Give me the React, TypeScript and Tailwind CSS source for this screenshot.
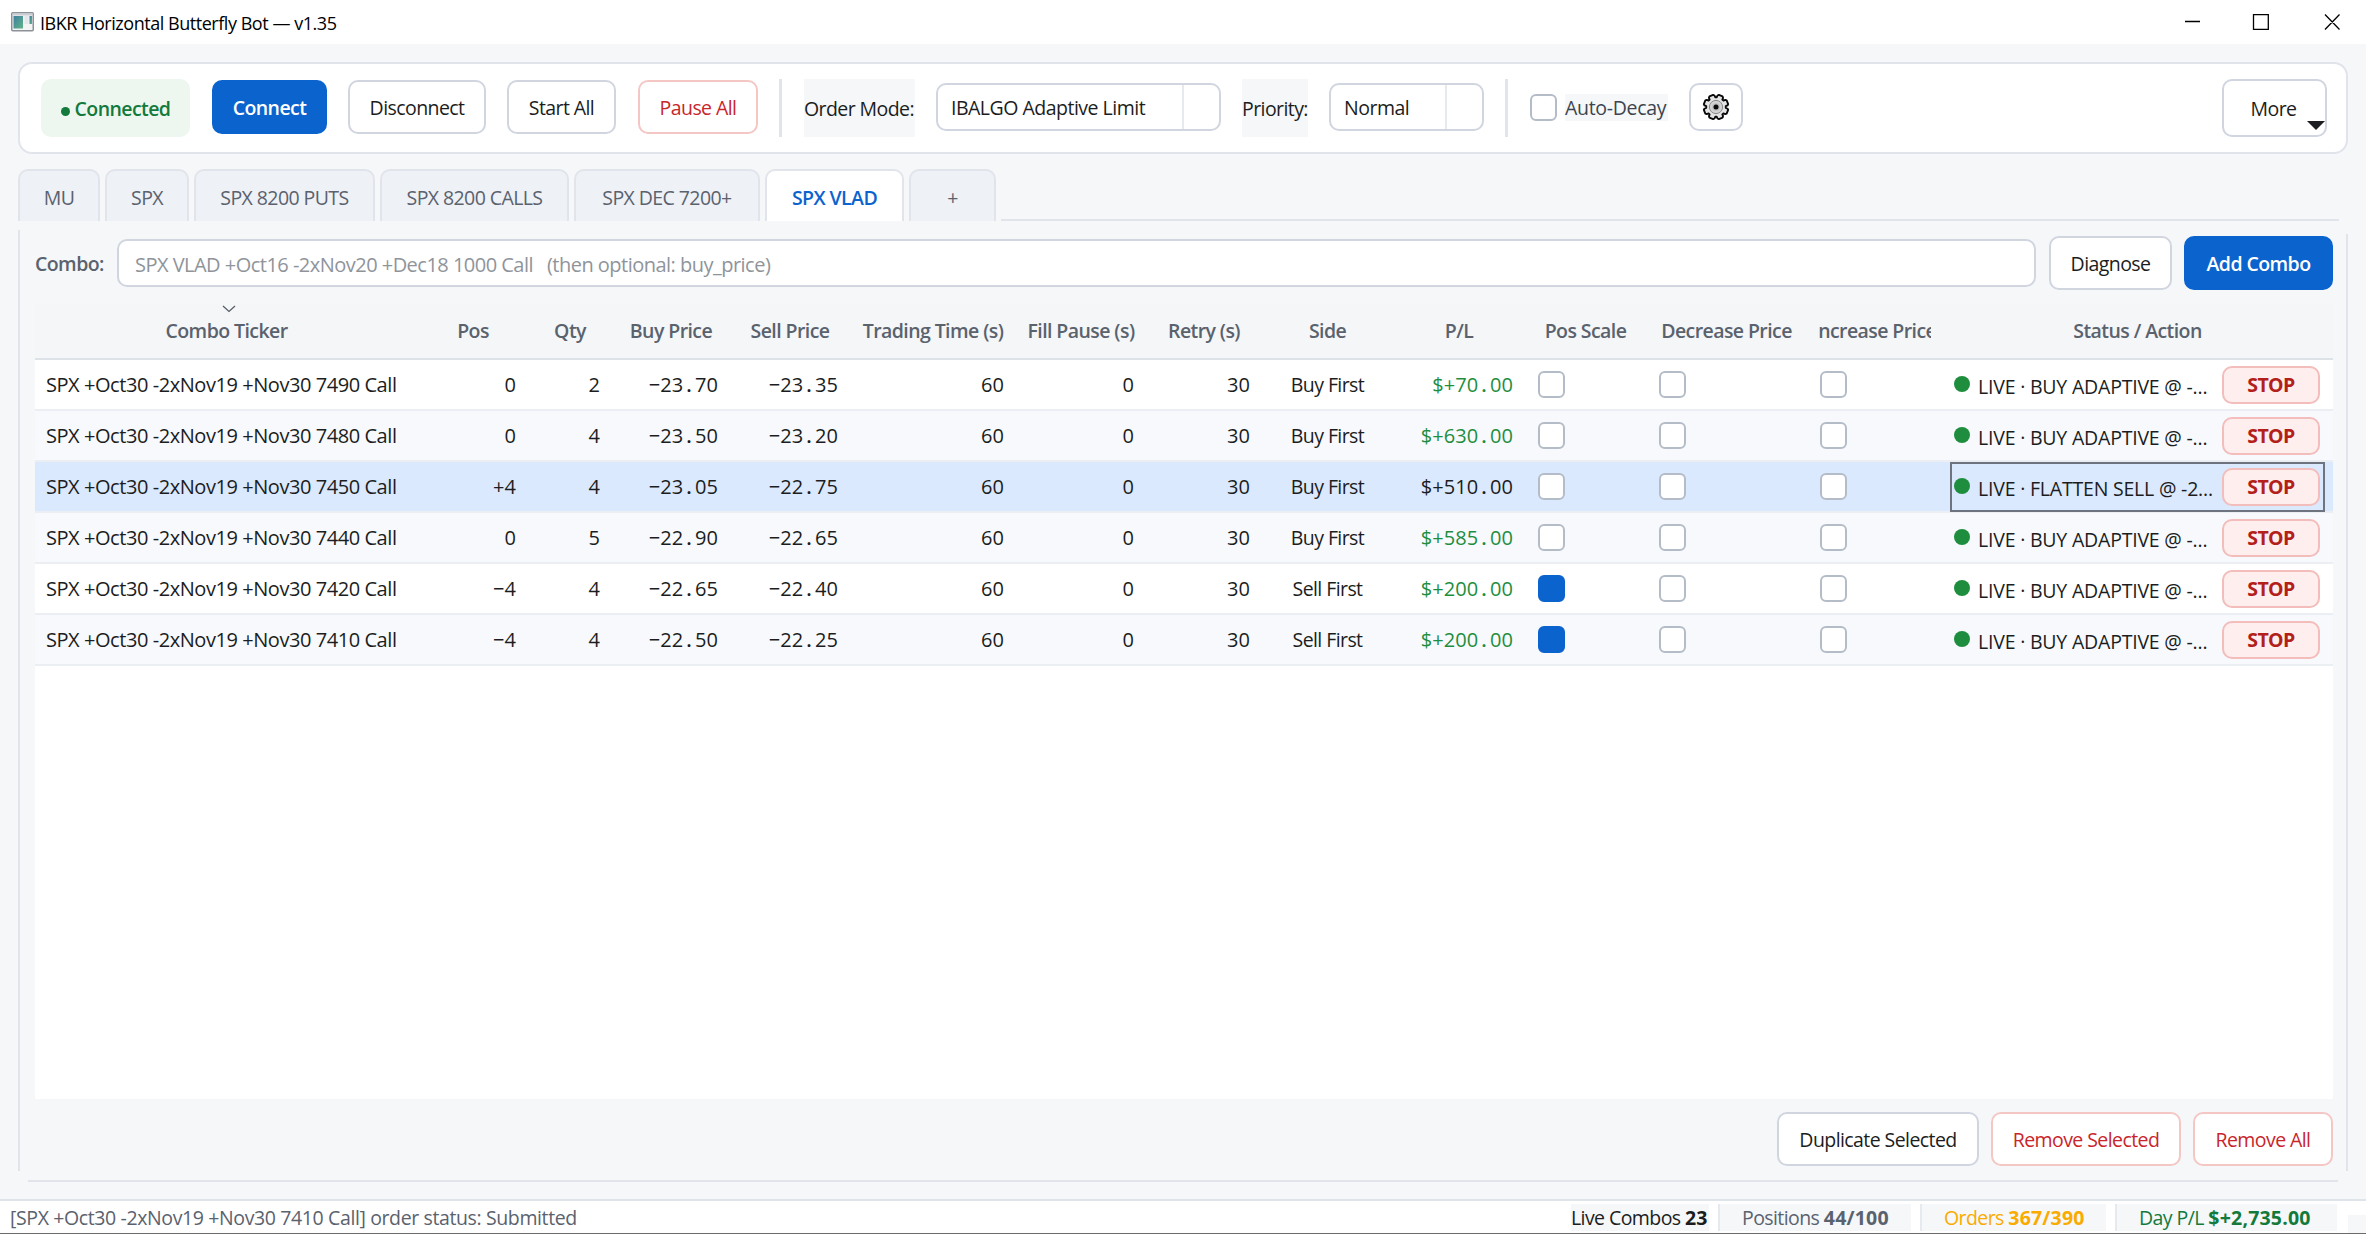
import clsx from "clsx";
import type { ReactNode } from "react";

type Combo = {
    ticker: string;
    pos: string;
    qty: string;
    buy: string;
    sell: string;
    side: string;
    pl: string;
    scale?: boolean;
    status: string;
    selected?: boolean;
};

const combos: Combo[] = [
    { ticker: "SPX +Oct30 -2xNov19 +Nov30 7490 Call", pos: "0", qty: "2", buy: "−23.70", sell: "−23.35", side: "Buy First", pl: "$+70.00", status: "LIVE · BUY ADAPTIVE @ -..." },
    { ticker: "SPX +Oct30 -2xNov19 +Nov30 7480 Call", pos: "0", qty: "4", buy: "−23.50", sell: "−23.20", side: "Buy First", pl: "$+630.00", status: "LIVE · BUY ADAPTIVE @ -..." },
    { ticker: "SPX +Oct30 -2xNov19 +Nov30 7450 Call", pos: "+4", qty: "4", buy: "−23.05", sell: "−22.75", side: "Buy First", pl: "$+510.00", status: "LIVE · FLATTEN SELL @ -2...", selected: true },
    { ticker: "SPX +Oct30 -2xNov19 +Nov30 7440 Call", pos: "0", qty: "5", buy: "−22.90", sell: "−22.65", side: "Buy First", pl: "$+585.00", status: "LIVE · BUY ADAPTIVE @ -..." },
    { ticker: "SPX +Oct30 -2xNov19 +Nov30 7420 Call", pos: "−4", qty: "4", buy: "−22.65", sell: "−22.40", side: "Sell First", pl: "$+200.00", scale: true, status: "LIVE · BUY ADAPTIVE @ -..." },
    { ticker: "SPX +Oct30 -2xNov19 +Nov30 7410 Call", pos: "−4", qty: "4", buy: "−22.50", sell: "−22.25", side: "Sell First", pl: "$+200.00", scale: true, status: "LIVE · BUY ADAPTIVE @ -..." },
];

const headers = [
    "Combo Ticker", "Pos", "Qty", "Buy Price", "Sell Price", "Trading Time (s)", "Fill Pause (s)",
    "Retry (s)", "Side", "P/L", "Pos Scale", "Decrease Price", "Increase Price", "Status / Action",
];

const tabs = [
    { label: "MU", width: "w-[82px]" },
    { label: "SPX", width: "w-[84px]" },
    { label: "SPX 8200 PUTS", width: "w-[181px]" },
    { label: "SPX 8200 CALLS", width: "w-[189px]" },
    { label: "SPX DEC 7200+", width: "w-[186px]" },
    { label: "SPX VLAD", width: "w-[139px]", active: true },
    { label: "+", width: "w-[87px]" },
];

const gridCols =
    "grid grid-cols-[383px_110px_84px_118px_120px_166px_130px_116px_131px_132px_121px_161px_135px_391px]";

const variants = {
    plain: "border-[#d0d5e0] bg-white text-[#1b1d21]",
    primary: "border-[#0b63ce] bg-[#0b63ce] font-semibold text-white",
    danger: "border-[#f4c7c5] bg-white text-[#c9252b]",
};

function Button({ variant = "plain", className, children }: { variant?: keyof typeof variants; className?: string; children: ReactNode }) {
    return (
        <button
            className={clsx(
                "flex h-[54px] shrink-0 items-center justify-center whitespace-nowrap rounded-[10px] border-2 pt-px",
                variants[variant],
                className,
            )}
        >
            {children}
        </button>
    );
}

function Select({ value, className }: { value: string; className: string }) {
    return (
        <div className={clsx("flex h-12 shrink-0 rounded-[10px] border-2 border-[#d0d5e0] bg-white", className)}>
            <span className="flex flex-1 items-center whitespace-nowrap pl-[13px] pt-px tracking-[-0.5px]">{value}</span>
            <span className="w-[37px] border-l-2 border-[#e6e9ee]" />
        </div>
    );
}

function Checkbox({ checked }: { checked?: boolean }) {
    return (
        <span
            className={clsx(
                "block size-[27px] shrink-0 rounded-md border-2",
                checked ? "border-[#0b63ce] bg-[#0b63ce]" : "border-[#b4bcc8] bg-white",
            )}
        />
    );
}

function CheckCell({ checked }: { checked?: boolean }) {
    return (
        <div className="flex items-center pb-px pl-[13px]">
            <Checkbox checked={checked} />
        </div>
    );
}

// Every figure takes one fixed slot, the decimal point included
function Num({ value, className }: { value: string; className?: string }) {
    const [whole, fraction] = value.split(".");
    return (
        <div className={clsx("flex items-center justify-end pr-3 text-[20px] tracking-[0.1px]", className)}>
            <span>
                {whole}
                {fraction && <span className="inline-block w-[11.6px] text-center font-semibold">.</span>}
                {fraction}
            </span>
        </div>
    );
}

function Separator() {
    return <div className="h-[58px] w-[3px] shrink-0 bg-[#e1e4ea]" />;
}

function AppIcon() {
    return (
        <svg width="23" height="20" viewBox="0 0 23 20">
            <defs>
                <linearGradient id="pane" x1="0" y1="0" x2="1" y2="1">
                    <stop offset="0" stopColor="#3f7f9f" />
                    <stop offset="1" stopColor="#5fb488" />
                </linearGradient>
            </defs>
            <rect x="0.75" y="0.75" width="21.5" height="18" rx="1" fill="#f4f4f4" stroke="#8c9298" strokeWidth="1.5" />
            <rect x="1.5" y="1.5" width="20" height="2" fill="#c9ced4" />
            <rect x="2.5" y="4" width="9.5" height="12.5" fill="url(#pane)" />
            <rect x="13.5" y="4" width="4" height="8" fill="#e4e6e9" />
            <rect x="18.5" y="4" width="2.5" height="8" fill="url(#pane)" />
        </svg>
    );
}

// Eight teeth around the centre, with a notch at the top
const gearPoints = Array.from({ length: 8 }, (_, tooth) =>
    [[-18, 9.8], [-15, 11.6], [-9, 12.5], [9, 12.5], [15, 11.6], [18, 9.8]].map(([offset, radius]) => {
        const angle = ((22.5 + tooth * 45 + offset) * Math.PI) / 180;
        return `${(14 + radius * Math.sin(angle)).toFixed(2)},${(14 - radius * Math.cos(angle)).toFixed(2)}`;
    }),
)
    .flat()
    .join(" ");

function Gear() {
    return (
        <svg width="28" height="28" viewBox="0 0 28 28">
            <polygon points={gearPoints} fill="#e4e4e4" stroke="#0a0a0a" strokeWidth="1.9" strokeLinejoin="round" />
            <circle cx="14" cy="14" r="6.6" fill="#d2d2d2" stroke="#8a8a8a" strokeWidth="1" />
            <circle cx="14" cy="14" r="3.8" fill="#bcbcbc" />
            <circle cx="14" cy="14" r="2.5" fill="#0a0a0a" />
        </svg>
    );
}

function TitleBar() {
    return (
        <div className="flex h-11 items-center bg-white pl-[11px] text-[18px] tracking-[-0.46px] text-black">
            <AppIcon />
            <span className="ml-1.5 pt-px">IBKR Horizontal Butterfly Bot — v1.35</span>
            <svg className="ml-auto mr-[26px]" width="155" height="16" viewBox="0 0 155 16" fill="none" stroke="#000" strokeWidth="1.3">
                <path d="M0 7.5H15M68.5 .7H83.3V15.3H68.5ZM140 .5L154.5 15.5M154.5 .5L140 15.5" />
            </svg>
        </div>
    );
}

function Toolbar() {
    return (
        <div className="mx-[18px] mt-[18px] flex h-[92px] items-center rounded-[14px] border-2 border-[#e1e4ea] bg-white pl-[21px] pr-[19px]">
            <div className="flex h-[58px] w-[149px] shrink-0 items-center justify-center rounded-[10px] bg-[#edf7f0] pt-0.5 font-semibold text-[#137a3b]">
                <span className="mr-[5px] mt-1 size-[9px] rounded-full bg-[#137a3b]" />
                Connected
            </div>
            <Button variant="primary" className="mb-0.5 ml-[22px] w-[115px]">Connect</Button>
            <Button className="mb-0.5 ml-[21px] w-[138px]">Disconnect</Button>
            <Button className="mb-0.5 ml-[21px] w-[109px]">Start All</Button>
            <Button variant="danger" className="mb-0.5 ml-[22px] mr-[21px] w-[120px]">Pause All</Button>
            <Separator />
            <span className="ml-[22px] flex h-[58px] w-[111px] shrink-0 items-center whitespace-nowrap bg-[#f5f7f9] pt-0.5">Order Mode:</span>
            <Select value="IBALGO Adaptive Limit" className="mb-0.5 ml-[21px] w-[285px]" />
            <span className="ml-[21px] flex h-[58px] w-[66px] shrink-0 items-center whitespace-nowrap bg-[#f5f7f9] pt-0.5">Priority:</span>
            <Select value="Normal" className="mx-[21px] mb-0.5 w-[155px]" />
            <Separator />
            <div className="mb-0.5 ml-[22px] flex h-[27px] w-[138px] items-center justify-between">
                <Checkbox />
                <span className="flex h-[27px] w-[103px] items-center whitespace-nowrap bg-[#f5f7f9] pt-0.5 tracking-[-0.3px] text-[#3c4450]">Auto-Decay</span>
            </div>
            <button className="mb-0.5 ml-[21px] flex h-12 w-[54px] items-center justify-center rounded-[10px] border-2 border-[#d0d5e0]">
                <Gear />
            </button>
            <button className="relative ml-auto flex h-[58px] w-[105px] items-center justify-center rounded-[10px] border-2 border-[#d0d5e0] pr-0.5 pt-0.5">
                More
                <svg className="absolute bottom-[5px] right-0" width="18" height="9" viewBox="0 0 18 9">
                    <path d="M0 0H18L9 9Z" fill="#1b1d21" />
                </svg>
            </button>
        </div>
    );
}

function Tabs() {
    return (
        <div className="mx-[18px] mt-[15px] flex h-[52px] gap-[5px]">
            {tabs.map((tab) => (
                <div
                    key={tab.label}
                    className={clsx(
                        "flex items-center justify-center whitespace-nowrap rounded-t-[10px] border-2 border-b-0 border-[#e1e4ea] pt-[3px]",
                        tab.width,
                        tab.active ? "bg-white font-semibold text-[#0b63ce]" : "bg-[#eef1f6] text-[#5a626e]",
                    )}
                >
                    {tab.label}
                </div>
            ))}
            <div className="mr-[9px] flex-1 border-b-2 border-[#e1e4ea]" />
        </div>
    );
}

function TableHeader() {
    return (
        <div className={clsx(gridCols, "h-[57px] border-b-2 border-[#dde1e8] bg-[#f4f6f8] font-semibold text-[#5a626e]")}>
            {headers.map((header) => (
                <div key={header} className="relative flex items-center justify-center overflow-hidden whitespace-nowrap pt-px">
                    {header === "Combo Ticker" && (
                        <svg className="absolute left-[187px] top-0.5" width="14" height="8" viewBox="0 0 14 8" fill="none" stroke="#555b64" strokeWidth="1.2">
                            <path d="M1 1L7 6.5L13 1" />
                        </svg>
                    )}
                    {header === "Increase Price" ? (
                        <span className="flex h-7 w-[112px] items-center justify-center overflow-hidden">{header}</span>
                    ) : (
                        header
                    )}
                </div>
            ))}
        </div>
    );
}

function Row({ combo, index }: { combo: Combo; index: number }) {
    return (
        <div
            className={clsx(
                gridCols,
                "relative h-[51px] whitespace-nowrap border-b-2 border-[#ebeff4]",
                combo.selected ? "bg-[#dbe9fe]" : index % 2 ? "bg-[#f7f9fd]" : "bg-white",
            )}
        >
            <div className="flex items-center pl-[11px] text-[20px] tracking-[-0.44px]">{combo.ticker}</div>
            <Num value={combo.pos} />
            <Num value={combo.qty} />
            <Num value={combo.buy} />
            <Num value={combo.sell} />
            <Num value="60" />
            <Num value="0" />
            <Num value="30" />
            <div className="flex items-center justify-center pt-px">{combo.side}</div>
            <Num value={combo.pl} className={combo.selected ? "" : "text-[#1e8e3e]"} />
            <CheckCell checked={combo.scale} />
            <CheckCell />
            <CheckCell />
            <div className="flex items-center pl-3 pr-[13px]">
                <span className="mb-0.5 size-4 shrink-0 rounded-full bg-[#1e8e3e]" />
                <span className="ml-2 mt-1 tracking-[-0.2px]">{combo.status}</span>
                <button className="ml-auto h-[38px] w-[98px] shrink-0 rounded-[10px] border-2 border-[#f2bdba] bg-[#feefee] font-bold text-[#b3201a]">
                    STOP
                </button>
            </div>
            {combo.selected && <div className="absolute left-[1915px] top-0 h-[50px] w-[375px] border-2 border-[#6d747f]" />}
        </div>
    );
}

function StatusItem({ label, value, className }: { label: string; value: string; className: string }) {
    return (
        <div className={clsx("flex h-[27px] items-center whitespace-pre bg-[#f5f7f9] pt-0.5", className)}>
            {label} <b className="tracking-[0.2px]">{value}</b>
        </div>
    );
}

function StatusBar() {
    return (
        <div className="flex h-[35px] items-center border-b border-t-2 border-b-[#6b6b6b] border-t-[#dfe3ea] bg-white pl-2.5">
            <span className="pt-0.5 tracking-[-0.38px] text-[#5a626e]">[SPX +Oct30 -2xNov19 +Nov30 7410 Call] order status: Submitted</span>
            <StatusItem label="Live Combos" value="23" className="ml-auto w-[138px]" />
            <StatusItem label="Positions" value="44/100" className="ml-[9px] w-[193px] border-l-2 border-[#e6e9ee] pl-[22px] text-[#5a626e]" />
            <StatusItem label="Orders" value="367/390" className="ml-[9px] w-[186px] border-l-2 border-[#e6e9ee] pl-[22px] text-[#f9ab00]" />
            <StatusItem label="Day P/L" value="$+2,735.00" className="ml-[9px] w-[222px] border-l-2 border-[#e6e9ee] pl-[22px] text-[#137a3b]" />
            <div className="ml-[11px] h-[18px] w-[18px] self-end bg-[#f5f7f9]" />
        </div>
    );
}

export default function App() {
    return (
        <div className="flex h-[1234px] w-[2366px] flex-col overflow-hidden bg-[#f5f7f9] font-['Open_Sans',sans-serif] text-[19.5px] leading-none tracking-[-0.58px] text-[#1b1d21]">
            <TitleBar />
            <Toolbar />
            <Tabs />
            <div className="mx-[18px] mt-[5px] flex h-[954px]">
                <div className="mb-[9px] mt-1 w-0.5 shrink-0 bg-[#e1e4ea]" />
                <div className="flex min-w-0 flex-1 flex-col pl-[15px] pr-[13px] pt-[10px]">
                    <div className="flex h-[54px] items-center">
                        <span className="w-[82px] pt-0.5 font-semibold text-[#5a626e]">Combo:</span>
                        <div className="flex h-12 flex-1 items-center whitespace-pre rounded-[10px] border-2 border-[#d0d5e0] bg-white pl-4 pt-[3px] text-[20px] tracking-[-0.52px] text-[#8f949b]">
                            {"SPX VLAD +Oct16 -2xNov20 +Dec18 1000 Call   (then optional: buy_price)"}
                        </div>
                        <Button className="ml-[13px] w-[123px]">Diagnose</Button>
                        <Button variant="primary" className="ml-3 w-[149px]">Add Combo</Button>
                    </div>
                    <div className="mt-[13px] h-[796px] w-[2298px] bg-white">
                        <TableHeader />
                        {combos.map((combo, index) => (
                            <Row key={combo.ticker} combo={combo} index={index} />
                        ))}
                    </div>
                    <div className="mt-[13px] flex justify-end gap-3">
                        <Button className="w-[202px]">Duplicate Selected</Button>
                        <Button variant="danger" className="w-[190px]">Remove Selected</Button>
                        <Button variant="danger" className="w-[140px]">Remove All</Button>
                    </div>
                </div>
                <div className="mb-[9px] mt-2 w-0.5 shrink-0 bg-[#e1e4ea]" />
            </div>
            <div className="mx-7 h-0.5 bg-[#e1e4ea]" />
            <div className="mt-auto">
                <StatusBar />
            </div>
        </div>
    );
}
